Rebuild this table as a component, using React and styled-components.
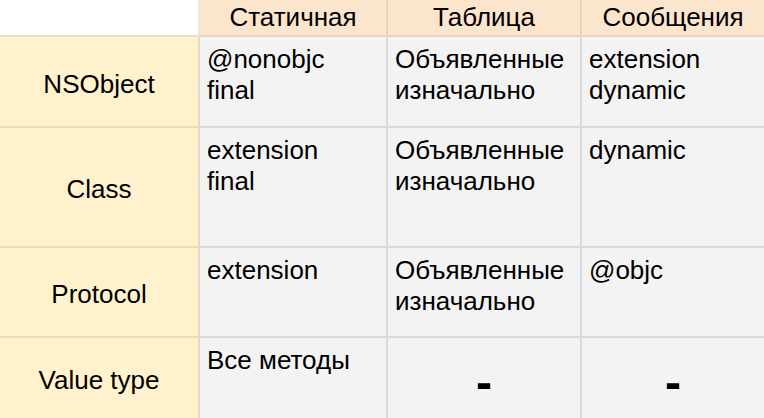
import React from "react";
import styled, { createGlobalStyle } from "styled-components";

const Global = createGlobalStyle`
  html, body { margin: 0; padding: 0; background: #ffffff; }
  body { font-family: "Liberation Sans", Arial, sans-serif; color: #000; }
`;

const Table = styled.div`
  display: grid;
  grid-template-columns: 200px 188px 194px 182px;
  grid-template-rows: 37px 91px 120px 90px 80px;
  width: 764px;
  height: 418px;
  font-family: "Liberation Sans", Arial, sans-serif;
  font-size: 26px;
  line-height: 29px;
`;

const Cell = styled.div`
  box-sizing: border-box;
  background: ${(p) => p.$bg};
  border-right: ${(p) => (p.$last ? "none" : "2px solid rgba(0,0,0,0.12)")};
  border-bottom: ${(p) => (p.$bottom ? "none" : "2px solid rgba(0,0,0,0.12)")};
  background-clip: border-box;
  overflow: hidden;
  white-space: nowrap;
`;

const Corner = styled(Cell)`
  background: #ffffff;
  border-right-color: #efe6d8;
  border-bottom-color: #e9dfc8;
`;

const Head = styled(Cell)`
  background: #fce5cd;
  display: flex;
  align-items: center;
  justify-content: center;
  border-right-color: #ead5bd;
  border-bottom-color: #e6d6c0;
`;

const Label = styled(Cell)`
  background: #fff2cc;
  display: flex;
  align-items: center;
  justify-content: center;
  padding-top: 5px;
  border-right-color: #dedbd0;
  border-bottom-color: #e8dcba;
`;

const Data = styled(Cell)`
  background: #f3f3f3;
  padding: 7px 7px;
  line-height: 31px;
  border-right-color: #d9d9d9;
  border-bottom-color: #d9d9d9;
`;

const DashCell = styled(Data)`
  display: flex;
  align-items: center;
  justify-content: center;
  padding: 9px 0 0 0;
`;

const Dash = styled.span`
  font-weight: 700;
  font-size: 48px;
  line-height: 1;
`;

const Line = styled.div``;

const columns = ["Статичная", "Таблица", "Сообщения"];

const rows = [
  {
    label: "NSObject",
    cells: [["@nonobjc", "final"], ["Объявленные", "изначально"], ["extension", "dynamic"]],
  },
  {
    label: "Class",
    cells: [["extension", "final"], ["Объявленные", "изначально"], ["dynamic"]],
  },
  {
    label: "Protocol",
    cells: [["extension"], ["Объявленные", "изначально"], ["@objc"]],
  },
  {
    label: "Value type",
    cells: [["Все методы"], null, null],
  },
];

export default function App() {
  return (
    <>
      <Global />
      <Table>
        <Corner />
        {columns.map((c, i) => (
          <Head key={c} $last={i === columns.length - 1}>{c}</Head>
        ))}
        {rows.map((r, ri) => {
          const bottom = ri === rows.length - 1;
          return (
            <React.Fragment key={r.label}>
              <Label $bottom={bottom}>{r.label}</Label>
              {r.cells.map((lines, ci) => {
                const last = ci === r.cells.length - 1;
                if (!lines) {
                  return (
                    <DashCell key={ci} $last={last} $bottom={bottom}>
                      <Dash>-</Dash>
                    </DashCell>
                  );
                }
                return (
                  <Data key={ci} $last={last} $bottom={bottom}>
                    {lines.map((l) => (
                      <Line key={l}>{l}</Line>
                    ))}
                  </Data>
                );
              })}
            </React.Fragment>
          );
        })}
      </Table>
    </>
  );
}
